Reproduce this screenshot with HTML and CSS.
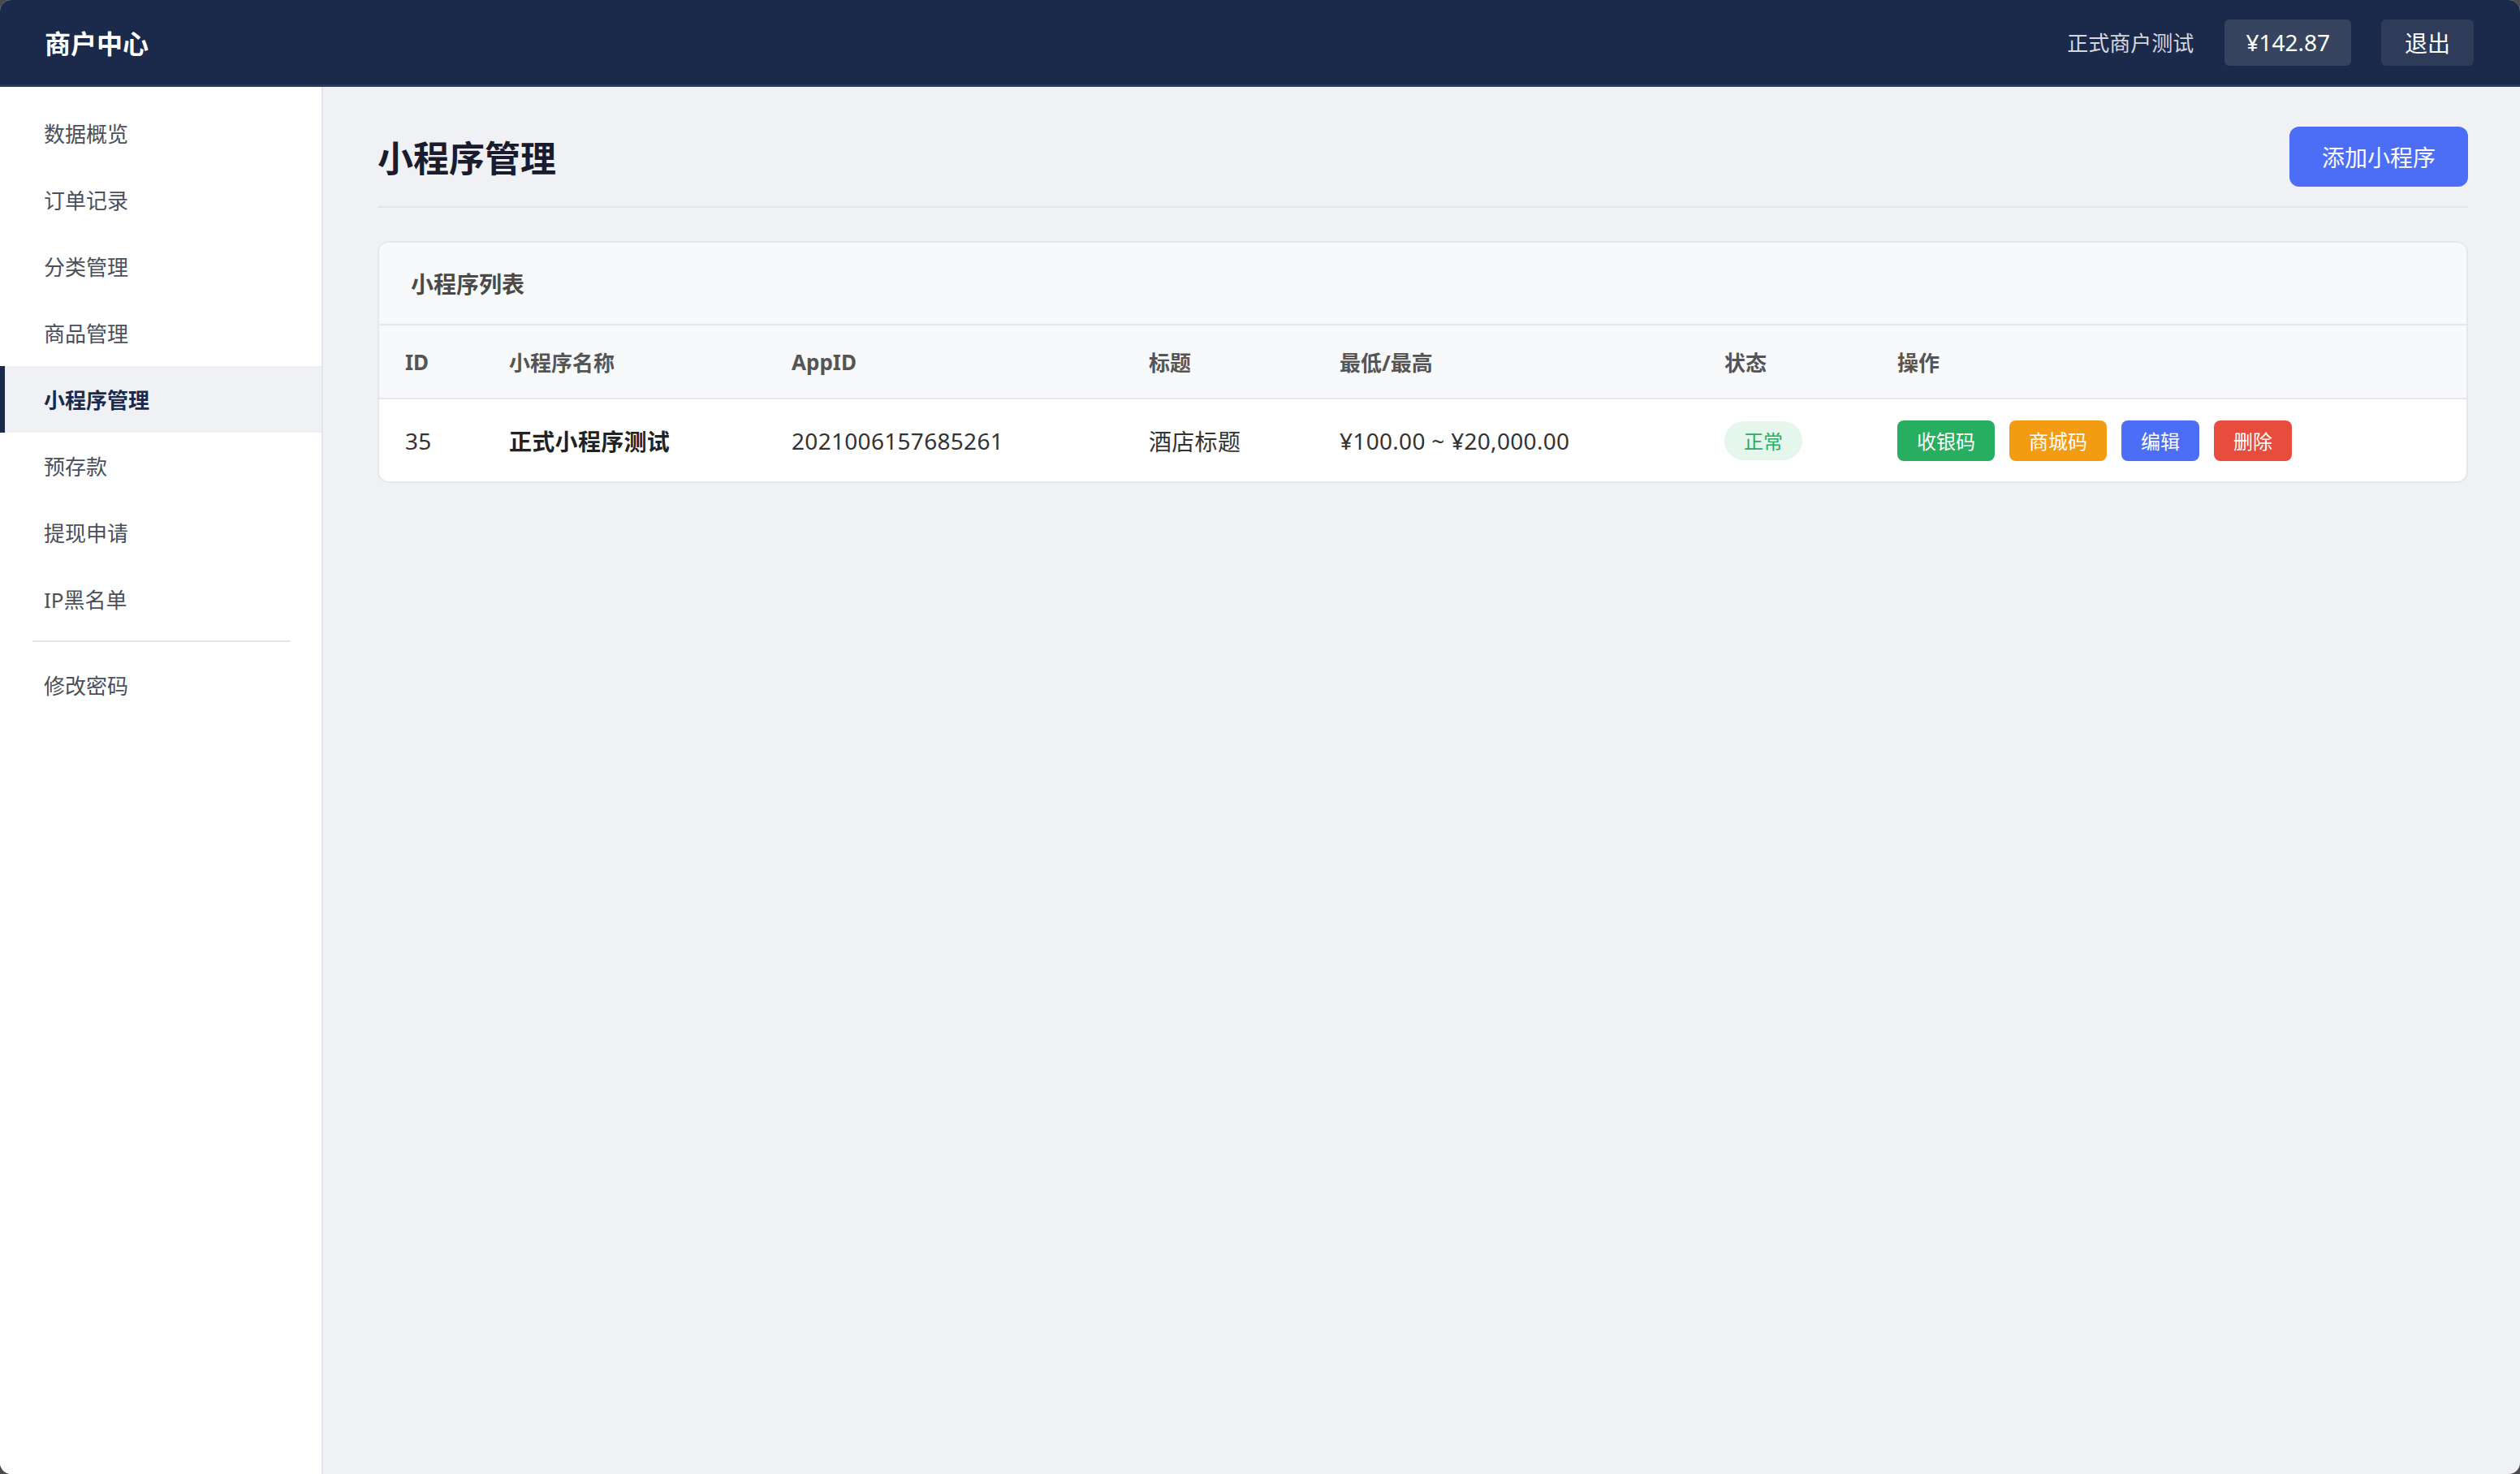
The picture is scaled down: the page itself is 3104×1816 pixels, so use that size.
FILE: index.html
```html
<!DOCTYPE html>
<html lang="zh-CN">
<head>
  <meta charset="UTF-8">
  <meta name="viewport" content="width=device-width, initial-scale=1.0">
  <title>商户中心 - 小程序管理</title>
  <link rel="stylesheet" href="styles.css">
</head>
<body>
  <header class="topbar">
    <div class="brand">商户中心</div>
    <div class="account">
      <span class="merchant-name">正式商户测试</span>
      <span class="balance">¥142.87</span>
      <a class="logout" href="#">退出</a>
    </div>
  </header>

  <div class="layout">
    <aside class="sidebar">
      <a class="nav-item" href="#">数据概览</a>
      <a class="nav-item" href="#">订单记录</a>
      <a class="nav-item" href="#">分类管理</a>
      <a class="nav-item" href="#">商品管理</a>
      <a class="nav-item active" href="#">小程序管理</a>
      <a class="nav-item" href="#">预存款</a>
      <a class="nav-item" href="#">提现申请</a>
      <a class="nav-item" href="#">IP黑名单</a>
      <div class="nav-divider"></div>
      <a class="nav-item" href="#">修改密码</a>
    </aside>

    <main class="main">
      <div class="page-head">
        <h1>小程序管理</h1>
        <button class="btn-primary">添加小程序</button>
      </div>

      <div class="card">
        <div class="card-header">小程序列表</div>
        <table class="data-table">
          <colgroup>
            <col class="col-id">
            <col class="col-name">
            <col class="col-appid">
            <col class="col-title">
            <col class="col-price">
            <col class="col-status">
            <col>
          </colgroup>
          <thead>
            <tr>
              <th>ID</th>
              <th>小程序名称</th>
              <th>AppID</th>
              <th>标题</th>
              <th>最低/最高</th>
              <th>状态</th>
              <th>操作</th>
            </tr>
          </thead>
          <tbody>
            <tr>
              <td>35</td>
              <td class="app-name">正式小程序测试</td>
              <td>2021006157685261</td>
              <td>酒店标题</td>
              <td>¥100.00 ~ ¥20,000.00</td>
              <td><span class="badge">正常</span></td>
              <td>
                <div class="actions">
                  <a class="btn-sm green" href="#">收银码</a>
                  <a class="btn-sm orange" href="#">商城码</a>
                  <button class="btn-sm blue">编辑</button>
                  <button class="btn-sm red">删除</button>
                </div>
              </td>
            </tr>
          </tbody>
        </table>
      </div>
    </main>
  </div>
</body>
</html>
```

FILE: styles.css
```css
html {
  background-color: #4b4b4d;
}

body {
  margin: 0;
  height: 100vh;
  display: flex;
  flex-direction: column;
  font-family: "Noto Sans", "Noto Sans CJK SC", sans-serif;
  background-color: #f0f1f5;
  border-radius: 14px;
  overflow: hidden;
}

a {
  text-decoration: none;
}

/* top bar */
.topbar {
  height: 104px;
  flex-shrink: 0;
  display: flex;
  align-items: center;
  justify-content: space-between;
  padding: 0 57px 0 55px;
  background-color: #1b2a4b;
  border-bottom: 3px solid #2b3858;
}

.brand {
  color: #fff;
  font-size: 32px;
  font-weight: 700;
}

.account {
  display: flex;
  align-items: center;
}

.merchant-name {
  color: #d3d8e0;
  font-size: 26px;
  margin-right: 38px;
}

.balance,
.logout {
  height: 57px;
  display: flex;
  align-items: center;
  color: #fff;
  font-size: 28px;
  border-radius: 6px;
}

.balance {
  padding: 0 26px;
  background-color: #36445f;
}

.logout {
  margin-left: 37px;
  padding: 0 29px;
  background-color: #2f3c59;
}

/* layout */
.layout {
  flex: 1;
  display: flex;
}

.sidebar {
  width: 396px;
  flex-shrink: 0;
  padding-top: 16px;
  background-color: #fff;
  border-right: 2px solid #e3e6ec;
}

.nav-item {
  display: flex;
  align-items: center;
  height: 82px;
  padding-left: 54px;
  font-size: 26px;
  color: #4a4f5c;
}

.nav-item.active {
  padding-left: 48px;
  border-left: 6px solid #1b2a4b;
  background-color: #f0f1f5;
  color: #1b2a4b;
  font-weight: 700;
}

.nav-divider {
  height: 2px;
  margin: 10px 38px 12px 40px;
  background-color: #e3e6ec;
}

/* main */
.main {
  flex: 1;
  padding: 0 64px 0 67px;
}

.page-head {
  display: flex;
  align-items: center;
  justify-content: space-between;
  padding: 49px 0 24px;
  border-bottom: 2px solid #e2e4ea;
}

.page-head h1 {
  margin: 0;
  font-size: 44px;
  font-weight: 700;
  color: #1b1b2f;
}

.btn-primary {
  height: 74px;
  padding: 0 40px;
  border: none;
  border-radius: 12px;
  background-color: #4c6ef7;
  color: #fff;
  font-family: inherit;
  font-size: 28px;
  cursor: pointer;
}

.card {
  margin-top: 41px;
  background-color: #fff;
  border: 2px solid #e6e7ea;
  border-radius: 14px;
  overflow: hidden;
}

.card-header {
  height: 100px;
  display: flex;
  align-items: center;
  padding-left: 39px;
  background-color: #f8f9fb;
  border-bottom: 2px solid #e6e7ea;
  font-size: 28px;
  font-weight: 700;
  color: #4a4a4a;
}

.data-table {
  width: 100%;
  border-collapse: collapse;
  table-layout: fixed;
}

.col-id { width: 128px; }
.col-name { width: 348px; }
.col-appid { width: 440px; }
.col-title { width: 235px; }
.col-price { width: 474px; }
.col-status { width: 213px; }

.data-table th,
.data-table td {
  padding: 0 0 0 32px;
  text-align: left;
  white-space: nowrap;
}

.data-table th {
  height: 89px;
  background-color: #f8f9fb;
  border-bottom: 2px solid #e6e7ea;
  font-size: 26px;
  font-weight: 700;
  color: #555;
}

.data-table td {
  height: 101px;
  font-size: 28px;
  letter-spacing: 0.3px;
  color: #333;
}

.data-table td.app-name {
  font-weight: 700;
  color: #222;
}

.badge {
  display: inline-flex;
  align-items: center;
  height: 48px;
  padding: 0 24px;
  border-radius: 24px;
  background-color: #e5f6ec;
  color: #27ae60;
  font-size: 24px;
  letter-spacing: 0;
}

.actions {
  display: flex;
  gap: 18px;
}

.btn-sm {
  display: inline-flex;
  align-items: center;
  height: 50px;
  padding: 0 24px;
  border: none;
  border-radius: 8px;
  color: #fff;
  font-family: inherit;
  font-size: 24px;
  letter-spacing: 0;
  cursor: pointer;
}

.btn-sm.green { background-color: #27ae60; }
.btn-sm.orange { background-color: #f39c12; }
.btn-sm.blue { background-color: #4c6ef7; }
.btn-sm.red { background-color: #e74c3c; }
```
